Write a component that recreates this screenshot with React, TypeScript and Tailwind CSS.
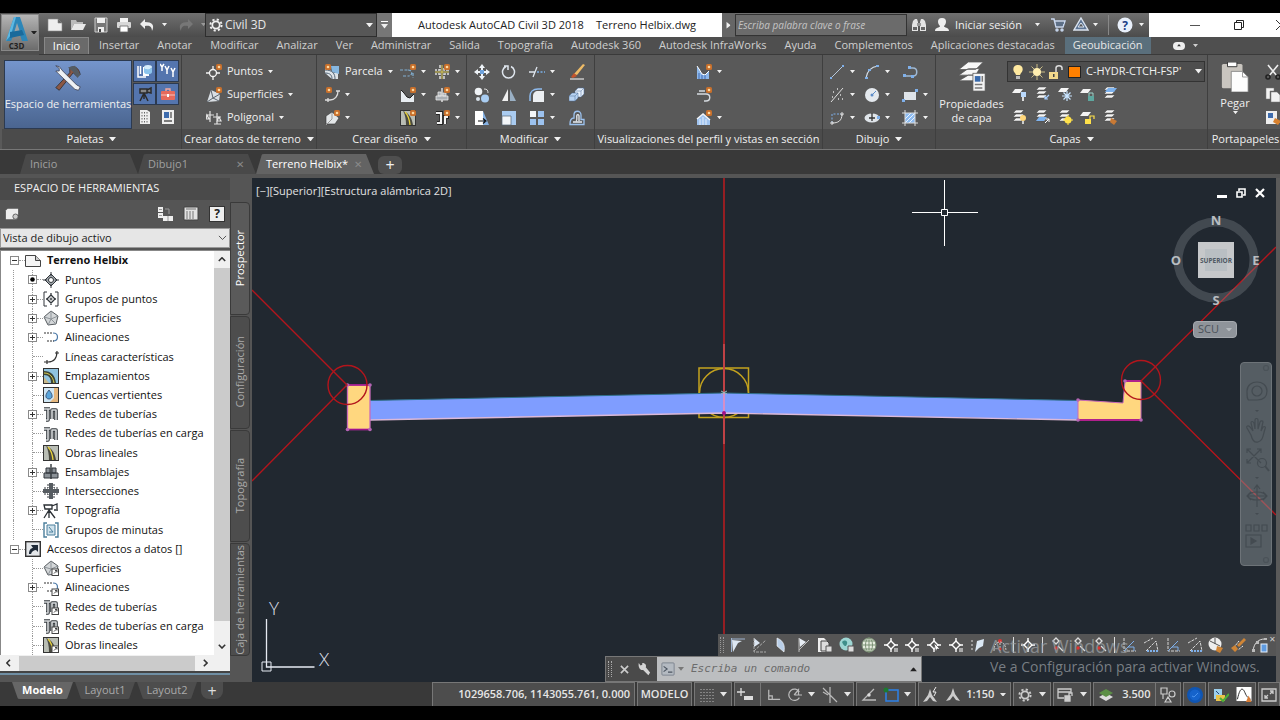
import type { ReactNode } from 'react';
import clsx from 'clsx';

/* ---------- icons ---------- */

const spark = (
  <g>
    <rect x="10" y="0" width="6" height="6" rx="1.5" fill="#c8702c" />
    <circle cx="13" cy="3" r="1.3" fill="#ffd9a0" />
  </g>
);

const sheets = (
  <path d="M5 1h8l-3 3H2zM5 5h8l-3 3H2zM5 9h8l-3 3H2z" fill="#f4f4f4" stroke="#444" strokeWidth=".5" />
);

const target = (
  <g fill="none" stroke="currentColor" strokeWidth="1.4">
    <path d="M8 4l4 4-4 4-4-4z" />
    <path d="M8 1v4M8 11v4M1 8h4M11 8h4" />
  </g>
);

const pipes = (
  <g fill="none" strokeLinejoin="round">
    <path d="M3 14h2V3M1 3h6M9 13V4h4v10" stroke="#33383c" strokeWidth="3.6" />
    <path d="M3 14h2V3M1 3h6M9 13V4h4v10" stroke="#d5d8da" strokeWidth="1.6" />
  </g>
);

const link = (
  <g>
    <rect x="9" y="9" width="6.5" height="6.5" fill="#fff" stroke="#444" />
    <path d="M11 13.5l3-3m-2 0h2v2" stroke="#444" fill="none" />
  </g>
);

const surface = (
  <g stroke="#555a5e">
    <path d="M8 1l7 5-2 8-8 1-4-8z" fill="#d3d6d8" />
    <path d="M8 1v8l7-3M8 9l5 5M8 9l-3 6M8 9L1 7" fill="none" stroke="#8d9398" />
  </g>
);

const alignment = (
  <g fill="none" stroke="#333" strokeWidth="1.2">
    <path d="M1 3h9" strokeDasharray="2 1" />
    <path d="M10 3c6 0 6 8 0 8" stroke="#4d7aa8" />
    <path d="M4 11h7" strokeDasharray="2 1" />
  </g>
);

const corridor = (
  <g>
    <rect x=".5" y=".5" width="15" height="15" fill="#b9bdb4" stroke="#333" />
    <path d="M3 1c6 2 9 7 10 14H6C6 9 5 4 3 1z" fill="#4a4a40" />
    <path d="M5 2c3 3 4.5 8 5 13" stroke="#e8d23c" strokeWidth="1.3" fill="none" />
  </g>
);

const icons: Record<string, ReactNode> = {
  newFile: <path d="M1 2h10l4 4v8H1zM11 2v4h4" fill="#eee" stroke="#888" strokeWidth=".6" />,
  open: (
    <g>
      <path d="M1 3h5l1 2h6v2H4l-3 6z" fill="#bbb" />
      <path d="M4 7h12l-3 6H1z" fill="#e8e8e8" />
    </g>
  ),
  save: (
    <g>
      <path d="M2 1h12v14H2z" fill="#777" stroke="#ccc" />
      <path d="M4 1h8v5H4zM5 10h6v5H5z" fill="#eee" />
      <path d="M6 12h2v3H6z" fill="#444" />
    </g>
  ),
  print: (
    <g>
      <path d="M4 1h8v4H4z" fill="#f4f4f4" />
      <rect x="1" y="5" width="14" height="6" rx="1" fill="#d8d8d8" />
      <path d="M4 9h8v6H4z" fill="#fff" stroke="#666" strokeWidth=".8" />
    </g>
  ),
  undo: <path d="M6 2L1 7l5 5V9c4-1 7 0 7 5 3-6 0-9-7-9z" fill="#eee" />,
  redo: <path d="M10 2l5 5-5 5V9c-4-1-7 0-7 5-3-6 0-9 7-9z" fill="#777" />,
  gear: (
    <g fill="none" stroke="currentColor">
      <circle cx="8" cy="8" r="4.2" strokeWidth="2" />
      <circle cx="8" cy="8" r="6.4" strokeWidth="2.2" strokeDasharray="2.5 2.53" />
    </g>
  ),
  binoculars: (
    <g fill="#e4e4e4">
      <path d="M2 4l2-2h2l1 3v9H1V8zM14 4l-2-2h-2L9 5v9h6V8z" />
      <path d="M6 6h4v3H6z" fill="#999" />
      <path d="M2 10h4v3H2zM10 10h4v3h-4z" fill="#666" />
    </g>
  ),
  user: <path d="M8 1c6 0 4 7 2 8 0 2 5 1 5 5H1c0-4 5-3 5-5C4 8 2 1 8 1z" fill="#eee" />,
  cart: (
    <g fill="none" stroke="#c9d8f0" strokeWidth="1.5">
      <path d="M1 2h3l2 8h7l2-6H5" />
      <path d="M6 6h8M6 8h7" stroke="#5d7594" />
      <circle cx="7" cy="13" r="1" />
      <circle cx="12" cy="13" r="1" />
    </g>
  ),
  app: (
    <g>
      <path d="M8 1l7 12H1z" fill="#5d7594" stroke="#dbe4f0" strokeWidth="1.4" />
      <path d="M8 6l3 4H5z" fill="#565656" stroke="#dbe4f0" />
    </g>
  ),
  help: (
    <g>
      <circle cx="8" cy="8" r="7.5" fill="#e9f0fb" />
      <text x="8" y="12.5" textAnchor="middle" fontSize="12" fontWeight="700" fill="#1c3f88">
        ?
      </text>
    </g>
  ),
  wrench: (
    <g>
      <path d="M9 2c3-1 5 0 6 4l-2 1-2-2-8 10-2-1.5L9 5z" fill="#8b5745" stroke="#222" strokeWidth=".4" />
      <path d="M8 2l4-1 3 5-1.5 2L11 4.5z" fill="#555c63" />
      <path d="M1 1l2 .5L5 4l8 8 2 1-1 2-2-.5L3 6 1 4l2 0 0-1.5z" fill="#eef1f4" stroke="#334" strokeWidth=".4" />
    </g>
  ),
  palData: (
    <g>
      <path d="M1 3v11h8M3.5 3v8" stroke="#fff" strokeWidth="1.5" fill="none" />
      <path d="M6 4h6v9H6z" fill="#fff" />
      <ellipse cx="11" cy="4" rx="4" ry="2" fill="#d6ecfb" />
      <path d="M7 4v5c0 3 8 3 8 0V4c0 3-8 3-8 0z" fill="#8cc4ec" />
    </g>
  ),
  palPipes: (
    <path
      d="M0 1l2 3v4M4 1L2 4M5 3l2 4v4M9 3L7 7M11 5l2 4v5M15 5l-2 4"
      stroke="#fff"
      strokeWidth="1.5"
      fill="none"
    />
  ),
  survey: (
    <g stroke="#2b2b2b" strokeWidth="1.5" fill="#888">
      <path d="M3 3h7v4H3zM10 4l4-2v5l-4-1" />
      <path d="M7 7L3 15M7 7l4 8M7 7v6" fill="none" />
    </g>
  ),
  toolbox: (
    <g>
      <path d="M6 5V3h4v2" stroke="#f3a79d" fill="none" strokeWidth="1.4" />
      <rect x="1" y="5" width="14" height="9" rx="1" fill="#e66a5c" />
      <path d="M1 9h14" stroke="#f7c2bb" />
      <rect x="7" y="8" width="2" height="3" fill="#fff" />
    </g>
  ),
  calc: (
    <g>
      <path d="M3 1h7l3 2v12H3z" fill="#eee" />
      <path d="M5 3v11M7.5 3v11M10 3v11" stroke="#666" strokeDasharray="1.5 1.5" />
    </g>
  ),
  props: (
    <g>
      <rect x="2" y="1" width="12" height="14" fill="#eee" />
      <rect x="4" y="3" width="5" height="6" fill="#3e6cae" />
      <path d="M11 3v6M4 12h8" stroke="#555" strokeWidth="1.3" />
    </g>
  ),
  points: (
    <g>
      <g stroke="#f4f4f4" strokeWidth="1.3" fill="none">
        <circle cx="7" cy="9" r="3.5" />
        <path d="M7 2v4M7 12v4M0 9h4M10 9h4" />
      </g>
      {spark}
    </g>
  ),
  surfaces: (
    <g>
      <path d="M5 3l9 4-1 7-12 1z" fill="#d9dee3" />
      <path d="M5 3l2 8-6 4M7 11l7-4M7 11l6 3" stroke="#59626b" fill="none" />
      {spark}
    </g>
  ),
  traverse: (
    <path
      d="M4 1v11M0 5h8M1 5l-1 4h3zM11 3v11M8 14h7M7 7h8M13 7l-2 4h4z"
      fill="none"
      stroke="#e4e4e4"
      strokeWidth="1.2"
    />
  ),
  parcel: (
    <g>
      <path d="M1 2h5v4l4 3h4v6H8L1 9z" fill="#dde3e8" />
      <path d="M7 2h8v8l-7-2z" fill="#86b7e0" />
      <path d="M1 9c6 0 7 3 7 6M1 6c8 0 10 4 10 9" stroke="#567" fill="none" />
      <g transform="translate(-9 0)">{spark}</g>
    </g>
  ),
  featLine: (
    <g>
      <path d="M1 13h5c5 0 8-4 8-9M4 11v4M12 4h4" fill="none" stroke="#ddd" strokeWidth="1.3" />
      <g transform="translate(-8 0)">{spark}</g>
    </g>
  ),
  grading: (
    <g>
      <path d="M2 6l6-4 7 6-4 6H2z" fill="#e3e6e8" stroke="#333" strokeWidth=".6" />
      <path d="M8 3v6l-6 6" stroke="#999" fill="none" />
      {spark}
    </g>
  ),
  align: (
    <g>
      <path
        d="M0 6h8M3 12h5M8 6c5 0 5 6 0 6M13 9v5"
        stroke="#82b0d4"
        strokeDasharray="3 1.5"
        fill="none"
        strokeWidth="1.2"
      />
      {spark}
    </g>
  ),
  inter: (
    <g>
      <path
        d="M6 1v5H1M6 15v-5H1M10 15v-5h5M10 4v2h5"
        stroke="#ddd"
        strokeWidth="1.5"
        fill="none"
        strokeDasharray="3 1"
      />
      <path d="M8 1v14M1 8h14" stroke="#dcca55" />
      {spark}
    </g>
  ),
  profile: (
    <g>
      <path d="M1 3v12h13V7l-4 4-3-1-3-4z" fill="#e8edf2" />
      <path d="M1 3l3 3 3 4 3 1 4-4" stroke="#222" fill="none" />
      {spark}
    </g>
  ),
  profileBlue: (
    <g>
      <path d="M1 2v13h12V7l-4 4-3-1-3-5z" fill="#8eb8ea" />
      <path d="M1 2l2 3 3 5 3 1 4-4" stroke="#fff" fill="none" />
      <path d="M3 9v6M6 11v4M9 11v4" stroke="#3e69b0" />
      {spark}
    </g>
  ),
  assembly: (
    <g>
      <path d="M8 1v14" stroke="#ddd" strokeWidth="1.5" />
      <path d="M2 9h12v4H2zM4 5h3v4H4zM9 6h3v3H9z" fill="#a9aeb3" stroke="#e7e7e7" strokeWidth=".8" />
      {spark}
    </g>
  ),
  corridor: (
    <g>
      {corridor}
      {spark}
    </g>
  ),
  pipeNet: (
    <g>
      <path d="M2 3h5v10H3M11 14V7h4" stroke="#222" strokeWidth="4" fill="none" />
      <path d="M2 3h5v10H3M11 14V7h3" stroke="#f2f2f2" strokeWidth="2.2" fill="none" />
      {spark}
    </g>
  ),
  move: (
    <g>
      <path d="M8 0l3 4H9v3h3V5l4 3-4 3V9H9v3h2l-3 4-3-4h2V9H4v2L0 8l4-3v2h3V4H5z" fill="#eef3f8" />
      <rect x="6" y="6" width="4" height="4" fill="#6ea2dc" />
    </g>
  ),
  rotate: <path d="M5 2.5a6 6 0 1 0 5 0M3 2h4v4" fill="none" stroke="#dfe6ee" strokeWidth="1.5" />,
  trim: (
    <g fill="none" strokeWidth="1.3">
      <path d="M0 8h6M4 13L8 3" stroke="#dfe6ee" />
      <path d="M8 8h8" stroke="#7bb0e6" strokeDasharray="2 1.5" />
    </g>
  ),
  erase: (
    <g>
      <path d="M14 0l2 1-8 10-3-1z" fill="#eebb66" />
      <path d="M5 9l3 3-4 2-2-1z" fill="#c4542d" />
      <path d="M1 15h14" stroke="#fff" />
    </g>
  ),
  copy: (
    <g>
      <circle cx="4.5" cy="4.5" r="3.8" fill="#f0f3f6" />
      <circle cx="11" cy="11.5" r="4" fill="#a9cdf2" />
      <circle cx="4" cy="12" r="2" fill="#d9e2ea" />
      <path d="M10 2c3 0 4 1 4 4" stroke="#ddd" fill="none" />
    </g>
  ),
  mirror: (
    <g>
      <path d="M7 2v12H1z" fill="#f0f0f0" />
      <path d="M9 2v12h6z" fill="#9ab0c4" />
    </g>
  ),
  fillet: (
    <g>
      <path d="M4 15V9c0-3 2-5 5-5h6v11z" fill="#eceff2" />
      <path d="M1 14V9c0-4 3-7 8-7h4" stroke="#8fbcf0" strokeWidth="1.5" fill="none" />
    </g>
  ),
  explode: (
    <g stroke="#4a6a94" strokeWidth=".5">
      <path d="M6 4l3-3h6v6l-3 3H6z" fill="#e6f0fb" />
      <path d="M0 9l3-3h6v5l-3 3H0z" fill="#b8d3f2" />
      <path d="M0 9h6v5M6 9l3-3M12 4l3-3M7 4h5v5" fill="none" />
    </g>
  ),
  stretch: (
    <g>
      <path d="M1 1h8v14H1z" fill="#fff" />
      <path d="M9 1l6 14H9z" fill="#86b2e4" />
      <path d="M4 11h7M9 8.5l3 2.5-3 2.5" stroke="#111" fill="none" strokeWidth="1.2" />
    </g>
  ),
  scale: (
    <g>
      <rect x="1" y="1" width="14" height="14" fill="#a9cbf0" />
      <path d="M1 6h9v9H1z" fill="#f2f5f8" stroke="#567" strokeWidth=".7" />
    </g>
  ),
  array: (
    <g fill="#9cc2ef">
      <rect x="1" y="1" width="6" height="6" fill="#f2f5f8" />
      <rect x="9" y="1" width="6" height="6" />
      <rect x="1" y="9" width="6" height="6" />
      <rect x="9" y="9" width="6" height="6" />
    </g>
  ),
  offset: (
    <g fill="none" strokeWidth="1.3">
      <path d="M1 14.500h14v-5h-3V5c0-5-7-5-7 0v3c-3 0-4 2-4 6z" stroke="#9cc2ef" />
      <path d="M4 12h9M7 11c2-1 0-4 1-6 1-1 2 0 2 1v5" stroke="#e8edf3" />
    </g>
  ),
  vista: (
    <g>
      <path d="M1 7h9c5 0 5 7 0 7H8M3 4h6" stroke="#d5dadf" fill="none" strokeWidth="1.4" />
      {spark}
    </g>
  ),
  section: (
    <g>
      <path d="M1 15V9l6-5 7 6v5z" fill="#9fc3ef" />
      <path d="M1 9l6-5 7 6" stroke="#f2f5f8" strokeWidth="1.5" fill="none" />
      <path d="M4 9v6M7 7v8M10 9v6" stroke="#e4eefb" />
      {spark}
    </g>
  ),
  line: (
    <g>
      <path d="M2 14L14 2" stroke="#b9c9da" />
      <path d="M1 13h2v2H1zM13 1h2v2h-2z" fill="#7fb0ea" />
    </g>
  ),
  arc: (
    <g>
      <path d="M2 14C3 7 7 3 14 2" stroke="#d4dde6" fill="none" strokeWidth="1.2" />
      <path d="M1 13h3v2H1zM4 5h3v2H4zM12 1h3v2h-3z" fill="#7fb0ea" />
    </g>
  ),
  pline: (
    <g>
      <path d="M2 12h9c5 0 5-8 0-8H7" stroke="#9fb9d4" fill="none" strokeWidth="1.5" />
      <path d="M1 10h3v3H1zM6 2h3v3H6zM9 11h3v3H9z" fill="#7fb0ea" />
    </g>
  ),
  xline: (
    <g>
      <path d="M2 15L14 1" stroke="#e0e0e0" />
      <path d="M4 5h1M8 2h1M11 8h1M9 12h1M3 10h1M13 12h1" stroke="#e0e0e0" strokeWidth="1.3" />
    </g>
  ),
  circle: (
    <g>
      <circle cx="8" cy="8" r="7" fill="#e4e9ee" />
      <circle cx="8" cy="8" r="1.5" fill="#5c8cc8" />
      <path d="M9 7l3-3" stroke="#5c8cc8" />
    </g>
  ),
  rect: (
    <g>
      <rect x="2" y="5" width="12" height="8" fill="#dfe4e9" />
      <path d="M0 12h3v3H0zM13 2h3v3h-3z" fill="#7fb0ea" />
    </g>
  ),
  polyArc: (
    <g fill="none">
      <path d="M3 13V4h9" stroke="#7fb0ea" strokeDasharray="2 1.5" />
      <path d="M3 13c6 0 10-2 10-9M3 11v4M1 13h4M13 2v4M11 4h4" stroke="#ddd" />
    </g>
  ),
  ellipse: (
    <g>
      <ellipse cx="8" cy="8" rx="7.5" ry="4.5" fill="#dfe4e9" />
      <path d="M8 3v8M5 8h6" stroke="#333" strokeWidth="1.3" />
      <rect x="13" y="6" width="3" height="3" fill="#7fb0ea" />
    </g>
  ),
  hatch: (
    <g>
      <rect x="3" y="3" width="10" height="10" fill="#8dbbf0" />
      <path d="M3 9l6-6M3 13L13 3M7 13l6-6" stroke="#e9f3ff" />
      <path d="M3 0v16M13 0v16M0 3h16M0 13h16" stroke="#ddd" />
    </g>
  ),
  bulb: (
    <g>
      <path d="M8 1c5 0 6 5 3 8l-1 2H6L5 9C2 6 3 1 8 1z" fill="#ffe9a0" />
      <path d="M6 12h4v3H6z" fill="#bbb" />
    </g>
  ),
  sun: (
    <g>
      <path d="M8 0v16M0 8h16M2.500 2.500l11 11M13.500 2.500l-11 11" stroke="#c9bb86" />
      <circle cx="8" cy="8" r="4" fill="#ffeeb0" />
    </g>
  ),
  unlock: (
    <g>
      <rect x="1" y="8" width="9" height="7" fill="#f3d98c" />
      <path d="M8 8V4c0-3 6-3 6 0v2" stroke="#ddd" strokeWidth="1.5" fill="none" />
      <rect x="5" y="10" width="1.5" height="3" fill="#444" />
    </g>
  ),
  layerOff: (
    <g>
      <path d="M4 3h8l-3 4H1z" fill="#f4f4f4" />
      <rect x="10" y="6" width="5" height="5" fill="#b9d8fb" />
      <path d="M12 11v4" stroke="#ddd" strokeWidth="2" />
    </g>
  ),
  layerIso: (
    <g>
      {sheets}
      <path d="M15 9l-4 4m0-3v3h3" stroke="#a8d0ff" fill="none" strokeWidth="1.2" />
    </g>
  ),
  layerFreeze: (
    <g>
      <path d="M4 2h8l-3 4H1z" fill="#f4f4f4" />
      <path d="M10 5v10M5 10h10M6.500 6.500l7 7M13.500 6.500l-7 7" stroke="#c8e4ff" strokeWidth="1.2" />
    </g>
  ),
  layerLock: (
    <g>
      <path d="M4 3h8l-3 4H1z" fill="#f4f4f4" />
      <rect x="9" y="10" width="6" height="5" fill="#5ea79f" />
      <path d="M10 10V7h4v3" stroke="#9ed4cc" fill="none" />
    </g>
  ),
  layerCur: (
    <g>
      {sheets}
      <path d="M6 2h9l-3 4H3z" fill="#7db2ee" />
    </g>
  ),
  layerOn: (
    <g>
      {sheets}
      <circle cx="12" cy="9" r="3" fill="#ffd67a" />
      <path d="M11 12h2v3h-2z" fill="#ccc" />
    </g>
  ),
  layerUniso: (
    <g>
      {sheets}
      <path d="M5 8h8l-3 4H2z" fill="#7db2ee" />
      <path d="M11 14l4-4m-3 0h3v3" stroke="#fff" fill="none" />
    </g>
  ),
  layerThaw: (
    <g>
      {sheets}
      <circle cx="11" cy="11" r="3.5" fill="#ffe14a" />
      <path d="M11 6v10M6 11h10" stroke="#ffe14a" />
    </g>
  ),
  layerUnlock: (
    <g>
      <path d="M4 3h8l-3 4H1z" fill="#f4f4f4" />
      <rect x="6" y="10" width="6" height="5" fill="#ffe14a" />
      <path d="M11 10V7h4v3" stroke="#ffe14a" fill="none" strokeWidth="1.2" />
    </g>
  ),
  layerMatch: (
    <g>
      {sheets}
      <path d="M9 9l6 3-3 4-4-3z" fill="#c97a35" />
    </g>
  ),
  layers: (
    <g>
      <path d="M6 0h8l-4 4H1zM6 3.500h6L10 7H1zM6 7h4l-1 3H1z" fill="#f7f7f7" stroke="#555" strokeWidth=".4" />
      <rect x="8.5" y="6" width="6.5" height="9.5" fill="#f4f4f4" stroke="#555" strokeWidth=".4" />
      <path d="M9.500 7.500h3v3h-3z" fill="#3769ac" />
      <path d="M13.500 7.500v3M9.500 12h4M9.500 13.800h4" stroke="#777" strokeWidth=".8" />
    </g>
  ),
  paste: (
    <g>
      <rect x="1" y="1" width="11" height="13" rx=".8" fill="#c9c5bf" />
      <path d="M4 0h5v2.500H4z" fill="#fff" stroke="#333" strokeWidth=".5" />
      <path d="M6 5h6l3 3v8H6z" fill="#fdfdfd" stroke="#777" strokeWidth=".4" />
      <path d="M12 5v3h3" fill="none" stroke="#999" strokeWidth=".5" />
    </g>
  ),
  cut: (
    <g fill="none" stroke="#eee" strokeWidth="1.6">
      <path d="M3 1l9 11M13 1L4 12" />
      <circle cx="3" cy="13" r="2" stroke="#222" />
      <circle cx="13" cy="13" r="2" stroke="#222" />
    </g>
  ),
  copyClip: <path d="M1 1h8v3H5v8H1zM6 5h6l3 3v7H6z" fill="#f2f2f2" stroke="#777" strokeWidth=".5" />,
  matchProp: (
    <g>
      <rect x="1" y="1" width="11" height="13" fill="#eee" />
      <rect x="3" y="3" width="5" height="5" fill="#3e6cae" />
      <path d="M10 8l6 3-3 4-5-3z" fill="#d9822f" />
    </g>
  ),

  /* tree */
  doc: (
    <g stroke="#444" fill="#f5f5f5">
      <path d="M.5 2.500h10l5 5v6H.5z" />
      <path d="M10.500 2.500v5h5" fill="#ccc" />
    </g>
  ),
  tPoints: (
    <g fill="#9fa5aa" stroke="#30353a">
      <path d="M8 2l6 6-6 6-6-6z" />
      <circle cx="8" cy="8" r="2.500" fill="#fff" />
      <path d="M8 0v4M8 12v4M0 8h4M12 8h4" />
    </g>
  ),
  tGroups: (
    <g fill="none" stroke="#30353a">
      <path d="M4 1H1v14h3M12 1h3v14h-3" />
      <path d="M8 4l4 4-4 4-4-4zM8 2v3M8 11v3M3 8h2M11 8h2" strokeWidth="1.3" />
      <circle cx="8" cy="8" r="1" />
    </g>
  ),
  tSurf: surface,
  tAlign: alignment,
  tLines: <path d="M1 13h4c5 0 9-3 9-11M4 11v4M12 4h4" fill="none" stroke="#333" strokeWidth="1.2" />,
  tSites: (
    <g>
      <rect x=".5" y=".5" width="15" height="15" fill="#8fc3e0" stroke="#333" />
      <path d="M1 3c7 0 11 4 12 12H8C8 10 6 7 1 7z" fill="#3c4536" />
      <path d="M1 5c6 0 9 4 10 10" stroke="#dccf50" fill="none" />
      <path d="M1 9l5 6H1z" fill="#c8b98a" />
    </g>
  ),
  tBasin: (
    <g>
      <rect x=".5" y=".5" width="15" height="15" fill="#cfe6f4" stroke="#333" />
      <path d="M11 1h4v14H7l4-4z" fill="#e5b77e" />
      <path d="M6 3c6 7 2 9 0 9s-6-2 0-9z" fill="#5aa6dc" stroke="#235" strokeWidth=".7" />
    </g>
  ),
  tPipes: pipes,
  tCorr: corridor,
  tAssem: (
    <g fill="#8a9096" stroke="#30353a">
      <path d="M1 9h14v5H1zM3 4h4v5H3zM9 4h4v5H9z" />
      <path d="M8 0v15" strokeWidth="1.4" />
    </g>
  ),
  tInter: (
    <g>
      <path d="M8 0v16M0 8h16" stroke="#555b60" strokeWidth="4" />
      <path d="M5 1v4H1M11 1v4h4M5 15v-4H1M11 15v-4h4" stroke="#30353a" fill="none" strokeDasharray="2 1" />
    </g>
  ),
  tSurvey: (
    <g fill="none" stroke="#2b3035" strokeWidth="1.3">
      <path d="M1 2h8v4H2zM9 3l5-2v5M6 6v9M6 7L1 15M6 7l6 8M11 7h4" />
    </g>
  ),
  tPlots: (
    <g fill="none" stroke="#4b7f9c">
      <path d="M4 1H1v14h3M12 1h3v14h-3" strokeWidth="1.4" />
      <path d="M4 3h8v10H4z" fill="#cfe2ec" />
      <path d="M6 5l4 5M6 10h4" />
    </g>
  ),
  tShort: (
    <g>
      <rect x=".7" y=".7" width="14.6" height="14.6" fill="#e4e7ea" stroke="#333" strokeWidth="1.4" />
      <path d="M4 13c0-4 2-6 4-6L6 4h7v7l-2-2c-2 0-4 1-5 4z" fill="#1e2a38" />
    </g>
  ),
  sSurf: <g>{surface}{link}</g>,
  sAlign: <g>{alignment}{link}</g>,
  sPipes: <g>{pipes}{link}</g>,
  sCorr: <g>{corridor}{link}</g>,

  /* floating toolbar */
  fA: (
    <g>
      <path d="M1 2h14M1.500 1v14" stroke="#9fb4d0" />
      <path d="M2 3l10 1-4 2-5 9z" fill="#dce6f2" />
    </g>
  ),
  fB: (
    <g>
      <path d="M2 1v9l6-4z" fill="#dce6f2" />
      <path d="M2 1v14h12M2 14L14 3" stroke="#aaa" fill="none" strokeDasharray="3 1" />
    </g>
  ),
  fC: <path d="M4 1c7 3 8 8 7 14L4 9z" fill="#b9cfe8" stroke="#fff" strokeWidth=".6" />,
  fD: (
    <g>
      <path d="M4 1l7 4-6 5z" fill="#e8eef5" />
      <path d="M4 15V1M4 13L14 3" stroke="#bbb" fill="none" />
    </g>
  ),
  fDoc: (
    <g>
      <path d="M1 1h6l3 3v11H1z" fill="#eee" />
      <path d="M4 4h6l2 2v8H4z" fill="#ddd" stroke="#444" />
      <path d="M9 9h6v6H9z" fill="#ddd" stroke="#555" />
    </g>
  ),
  fEarth: (
    <g>
      <circle cx="7" cy="7" r="6.5" fill="#9ed6d3" />
      <path d="M3 5c3-3 6-1 5 2s-3 3-5-2z" fill="#3f8f8a" />
      <path d="M9 9h6v6H9z" fill="#ddd" stroke="#555" />
    </g>
  ),
  fGlobe: (
    <g fill="none" stroke="#7b9175">
      <circle cx="8" cy="8" r="7" fill="#e6ecdf" />
      <path d="M1 8h14M8 1v14M3 4h10M3 12h10" />
      <ellipse cx="8" cy="8" rx="3.5" ry="7" />
    </g>
  ),
  fPt: <g className="text-white">{target}</g>,
  fPtB: <g className="text-white">{target}<path d="M11 11h4v4h-4z" fill="#aaa" /></g>,
  fPtC: <g className="text-white">{target}<path d="M8 6l6 6-3 0-1 3z" fill="#fff" stroke="#333" strokeWidth=".5" /></g>,
  fEdit: (
    <g>
      <path d="M2 3v11" stroke="#ddd" strokeDasharray="2 2" />
      <path d="M7 4l7-2-1 7-4 2-4 4z" fill="#dbe8f4" />
    </g>
  ),
  fRed: (
    <g>
      <circle cx="8" cy="4" r="2" fill="#d33" />
      <path d="M2 14c0-8 4-9 6-9s6 2 6 9M8 6v9" stroke="#ccc" fill="none" strokeDasharray="2 1" />
      <circle cx="8" cy="12" r="1.5" fill="#d33" />
    </g>
  ),
  fRedPt: (
    <g fill="none" stroke="#ddd" strokeWidth="1.3">
      <path d="M7 1l3 3-3 3-3-3zM9 9l5 5" />
      <circle cx="7" cy="11" r="1.7" fill="#d33" stroke="none" />
    </g>
  ),
  fAxis: (
    <g>
      <path d="M3 1v13h12" stroke="#d5d5d5" fill="none" strokeDasharray="3 1" />
      <path d="M3 14L13 4M7 10h6v4" stroke="#7fb0ea" fill="none" />
    </g>
  ),
  fAxisB: (
    <g>
      <path d="M1 6L10 1M3 14L13 4l2 10" stroke="#d5d5d5" fill="none" strokeDasharray="3 1" />
      <path d="M4 14h11" stroke="#7fb0ea" strokeDasharray="2 1" strokeWidth="2" />
    </g>
  ),
  fBall: (
    <g>
      <circle cx="7" cy="7" r="6.5" fill="#eee" />
      <path d="M2 4l10 5M7 1v6" stroke="#555" />
      <path d="M9 9l6 2-3 5-4-2z" fill="#cf8536" />
    </g>
  ),
  fBrush: (
    <g>
      <path d="M1 11l4 4 3-3-3-4zM14 1l2 2-7 7-2-2z" fill="#cf8536" />
      <path d="M9 4l-4 5M13 9l-5 4" stroke="#eee" strokeDasharray="2 1" />
    </g>
  ),
  fCalc: (
    <g>
      <path d="M1 14C2 6 6 2 13 2" stroke="#ddd" fill="none" />
      <path d="M0 12h3v3H0zM4 4h3v3H4zM12 1h3v2h-3z" fill="#bbb" />
      <rect x="9" y="7" width="6" height="8" fill="#5f9be0" stroke="#e9f1fb" />
    </g>
  ),

  /* status bar */
  grid: <path d="M2 2v13M5 2v13M8 2v13M11 2v13M14 2v13" stroke="#bbb" strokeDasharray="1 2" />,
  snap: (
    <g>
      <path d="M4 1v8M0 5h8" stroke="#ddd" strokeWidth="1.3" />
      <rect x="7" y="9" width="9" height="4" fill="#ddd" />
    </g>
  ),
  ortho: <path d="M2 2v11h13M2 9h4v4" stroke="#bbb" fill="none" strokeWidth="1.4" />,
  polar: <path d="M13 11A6.500 6.500 0 1 1 13 4.500M7 8h9M7 8l5-6v6" stroke="#bbb" fill="none" strokeWidth="1.4" />,
  iso: <path d="M1 1l14 14M8 0v16M1 5l5 3" stroke="#bbb" fill="none" strokeWidth="1.2" />,
  otrack: (
    <g>
      <path d="M15 13H2L13 2" stroke="#bbb" fill="none" strokeWidth="1.3" />
      <circle cx="8" cy="8" r="1.7" fill="#ddd" />
    </g>
  ),
  osnap: (
    <g>
      <rect x="3" y="3" width="12" height="11" fill="none" stroke="#2f7fe0" strokeWidth="1.6" />
      <circle cx="3" cy="3" r="2.5" fill="#1d7a2f" />
    </g>
  ),
  anno: <path d="M8 1l2 6 5 7-4-1-3-4-3 4-4 1 5-7z" fill="#ccc" />,
  annoB: (
    <g>
      <path d="M7 2l2 6 5 7-4-1-3-4-3 4-4 1 5-7z" fill="#ccc" />
      <path d="M13 0l-3 5h3l-2 4" stroke="#eee" fill="none" />
    </g>
  ),
  lockUi: (
    <g fill="none" stroke="#ccc" strokeWidth="1.3">
      <path d="M7 11H1V2h13v4M1 5h13" />
      <path d="M8 9h5v5H8z" fill="#ccc" />
      <path d="M12 9V6h3v3" />
    </g>
  ),
  stack: (
    <g>
      <path d="M8 6l7 4-7 4-7-4z" fill="#ddd" />
      <path d="M8 2l7 4-7 4-7-4z" fill="#5c8f46" />
    </g>
  ),
  shapes: (
    <g fill="none" stroke="#ccc" strokeWidth="1.2">
      <path d="M1 1h6v6H1zM5 15l3-5 3 5zM3 7v5" />
      <circle cx="12" cy="7" r="3" />
    </g>
  ),
  disc: (
    <g>
      <circle cx="8" cy="8" r="8" fill="#0f55b3" />
      <circle cx="8" cy="8" r="5.5" fill="#1563cb" />
      <path d="M5 9l2 1 4-4" stroke="#4a93ee" fill="none" />
    </g>
  ),
  geo: (
    <g>
      <path d="M1 2h8v10H1z" fill="#9cd0ee" />
      <path d="M3 8h9v6H3z" fill="#e9c34a" />
      <path d="M7 11l3 3 6-7" stroke="#4caf38" strokeWidth="2" fill="none" />
      <path d="M3 4l3 3" stroke="#247" />
    </g>
  ),
  graph: (
    <g>
      <rect width="16" height="15" fill="#fff" />
      <path d="M1 13C4-1 7 1 9 6s4 6 6 7" stroke="#222" fill="none" />
      <path d="M13 9l3 7h-6z" fill="#d77b34" />
    </g>
  ),
  full: (
    <g fill="none" stroke="#ccc" strokeWidth="1.3">
      <path d="M1 2h14v12H1z" />
      <path d="M4 11l3-3M9 7l3-3M4 8v3h3M9 4h3v3" />
    </g>
  ),
  treeA: (
    <g>
      <path d="M1 1h5v5H1zM1 7h5v5H1zM6 10h10v5H6z" fill="#eee" />
      <path d="M8 3h4v5M11 10v5M2 3.500h3M2 9.500h3" stroke="#999" fill="none" />
    </g>
  ),
  treeB: (
    <g>
      <path d="M1 1h14v13H1z" fill="#e2e2e2" stroke="#444" />
      <path d="M3 3h10M4 5v8M7 5v8M10 5v8" stroke="#777" />
    </g>
  ),
  treeC: (
    <g>
      <path d="M3 2h12v7l-3 5H1V4z" fill="#eee" />
      <circle cx="12" cy="11" r="3" fill="#ccc" stroke="#555" />
    </g>
  ),
  tool: <path d="M2 1l2 3 2-1 0-2c4 0 5 3 4 5l5 6-2 3-6-6C4 10 1 6 2 1z" fill="#d4d4d4" />,
  cmd: (
    <g>
      <rect x="1" y="1" width="14" height="14" rx="1" fill="#b4bac1" stroke="#78808a" />
      <path d="M3 5l4 3-4 3M8 11.500h5" stroke="#4c5560" fill="none" strokeWidth="1.3" />
    </g>
  ),
};

function Icon({ n, className = 'h-4 w-4' }: { n: string; className?: string }) {
  return (
    <svg viewBox="0 0 16 16" aria-hidden="true" className={clsx('shrink-0', className)}>
      {icons[n]}
    </svg>
  );
}

function Caret({ className = 'w-[6px]' }: { className?: string }) {
  return (
    <svg viewBox="0 0 8 5" aria-hidden="true" className={clsx('shrink-0', className)}>
      <path d="M0 0h8L4 5z" fill="currentColor" />
    </svg>
  );
}

/* ---------- title bar ---------- */

const quick = [
  ['newFile', 'Nuevo'],
  ['open', 'Abrir'],
  ['save', 'Guardar'],
  ['print', 'Trazar'],
  ['undo', 'Deshacer'],
];

function TitleBar() {
  return (
    <div className="flex h-6 items-stretch overflow-hidden bg-gradient-to-b from-[#707070] to-[#4c4c4c]">
      <div className="flex w-[166px] shrink-0 items-center gap-[7px] pl-2">
        {quick.map(([n, label]) => (
          <button key={n} aria-label={label}>
            <Icon n={n} />
          </button>
        ))}
        <Caret className="w-[5px]" />
        <button aria-label="Rehacer" className="ml-1">
          <Icon n="redo" />
        </button>
        <Caret className="w-[5px] text-[#999]" />
      </div>
      <label className="flex w-[172px] shrink-0 items-center gap-[2px] border border-[#2e2e2e] bg-[#575757] px-[3px]">
        <Icon n="gear" className="h-[14px] w-[14px]" />
        <select aria-label="Espacio de trabajo" className="min-w-0 flex-1 appearance-none bg-transparent text-xs text-[#e8e8e8]">
          <option>Civil 3D</option>
        </select>
        <Caret className="w-[7px]" />
      </label>
      <button aria-label="Personalizar" className="flex w-[15px] shrink-0 flex-col items-center justify-center gap-[2px] bg-[#777]">
        <span className="h-px w-[7px] bg-white" />
        <Caret className="w-[7px]" />
      </button>
      <div className="flex flex-1 items-center justify-center gap-3 whitespace-nowrap bg-white text-[11px] text-[#222]">
        <span>Autodesk AutoCAD Civil 3D 2018</span>
        <span>Terreno Helbix.dwg</span>
      </div>
      <button aria-label="Mostrar búsqueda" className="flex w-[13px] shrink-0 items-center justify-center bg-[#666]">
        <Caret className="w-[7px] -rotate-90" />
      </button>
      <input
        aria-label="Buscar"
        placeholder="Escriba palabra clave o frase"
        className="my-px w-[172px] shrink-0 border border-[#333] bg-[#6b6b6b] px-[2px] text-[10px] italic placeholder:text-[#c4c4c4]"
      />
      <div className="flex w-[242px] shrink-0 items-center pl-1">
        <Icon n="binoculars" />
        <Icon n="user" className="ml-[7px] h-4 w-4" />
        <button className="ml-[5px] w-[80px] whitespace-nowrap text-left text-[11px]">Iniciar sesión</button>
        <Caret className="w-[5px]" />
        <Icon n="cart" className="ml-[10px] h-4 w-4" />
        <Icon n="app" className="ml-[7px] h-4 w-4" />
        <Caret className="ml-1 w-[5px]" />
        <span className="ml-[10px] h-5 w-px bg-[#888]" />
        <Icon n="help" className="ml-2 h-4 w-4" />
        <Caret className="ml-[6px] w-[5px]" />
      </div>
      <div className="flex w-[131px] shrink-0 items-center justify-between bg-white pl-[38px]">
        <button aria-label="Minimizar" className="flex h-4 w-4 items-center justify-center">
          <span className="h-px w-[10px] bg-[#555]" />
        </button>
        <button aria-label="Restaurar" className="h-4 w-4">
          <svg viewBox="0 0 16 16" fill="none" stroke="#222">
            <path d="M3.500 5.500h7v7h-7zM5.500 5.500v-2h7v7h-2" />
          </svg>
        </button>
        <button aria-label="Cerrar" className="h-4 w-[6px] overflow-hidden">
          <svg viewBox="0 0 16 16" className="h-4 w-4" stroke="#333">
            <path d="M2 3l10 10M12 3L2 13" />
          </svg>
        </button>
      </div>
    </div>
  );
}

const ribbonTabs = [
  'Insertar', 'Anotar', 'Modificar', 'Analizar', 'Ver', 'Administrar', 'Salida', 'Topografía',
  'Autodesk 360', 'Autodesk InfraWorks', 'Ayuda', 'Complementos', 'Aplicaciones destacadas',
];

function Header() {
  return (
    <header className="flex bg-[#4f4f4f]">
      <button
        aria-label="Menú de la aplicación"
        className="ml-px mt-px flex h-[37px] w-[38px] shrink-0 items-center border border-[#888] bg-gradient-to-b from-[#b5b5b5] to-[#6c6c6c]"
      >
        <span className="flex flex-1 flex-col items-center">
          <svg viewBox="0 0 24 26" className="h-[26px] w-6">
            <path d="M9 1h6l8 24h-6l-2-6-7 1-2 5H1z" fill="#2c86b8" />
            <path d="M9 1l2 0-5 18-5 6z" fill="#5db8e2" />
            <path d="M12 7l3 9-6 1z" fill="#9ea3a6" />
            <path d="M5 16l12-2 2 5-14 3z" fill="#1a6a9b" />
          </svg>
          <span className="text-[8px] font-bold leading-[8px] text-[#222]">C3D</span>
        </span>
        <Caret className="mr-px w-[6px] text-[#222]" />
      </button>
      <div className="min-w-0 flex-1">
        <TitleBar />
        <nav className="flex h-[18px] items-center gap-[18px] overflow-hidden whitespace-nowrap border-b border-[#3a3a3a] pl-[5px] text-[11px] text-[#cfcfcf]">
          <button className="-mr-2 h-full w-[45px] border border-b-0 border-[#888] bg-[#6a6a6a] text-white">Inicio</button>
          {ribbonTabs.map((t) => (
            <button key={t}>{t}</button>
          ))}
          <button className="-ml-2 h-full bg-[#5a6f7c] px-2 text-[#e8e8e8]">Geoubicación</button>
          <button aria-label="Minimizar cinta" className="ml-1 flex items-center gap-2">
            <span className="flex h-2 w-3 items-center justify-center rounded-sm bg-[#eee]">
              <Caret className="w-1 rotate-180 text-[#333]" />
            </span>
            <Caret className="w-[5px]" />
          </button>
        </nav>
      </div>
    </header>
  );
}

/* ---------- ribbon ---------- */

interface PanelProps {
  title: string;
  className: string;
  menu?: boolean;
  children: ReactNode;
}

function Panel({ title, className, menu = true, children }: PanelProps) {
  return (
    <section className={clsx('flex shrink-0 flex-col border-r border-[#3f3f3f]', className)}>
      <div className="flex h-[75px] pt-[5px]">{children}</div>
      <button className="flex h-5 items-center justify-center gap-[6px] whitespace-nowrap bg-[#4b4b4b] text-[11px]">
        {title}
        {menu && <Caret className="w-[7px]" />}
      </button>
    </section>
  );
}

// [icon, label, has menu, label is shown]
type ToolDef = [string, string, boolean?, boolean?];

function Tools({ items, className }: { items: ToolDef[]; className?: string }) {
  return (
    <div className={clsx('flex shrink-0 flex-col', className)}>
      {items.map(([n, label, menu, text]) => (
        <button key={n} aria-label={label} className="flex h-[23px] items-center gap-[5px] whitespace-nowrap text-[11px]">
          <Icon n={n} />
          {text && <span>{label}</span>}
          {menu && <Caret className="w-[5px]" />}
        </button>
      ))}
    </div>
  );
}

const paletteToggles: [string, string, boolean][] = [
  ['palData', 'Panorámica', true],
  ['palPipes', 'Tuberías', true],
  ['survey', 'Topografía', true],
  ['toolbox', 'Caja de herramientas', true],
  ['calc', 'Calculadora', false],
  ['props', 'Propiedades', false],
];

const layerTools = [
  ['layerOff', 'Desactivar'],
  ['layerIso', 'Aislar'],
  ['layerFreeze', 'Inutilizar'],
  ['layerLock', 'Bloquear'],
  ['layerCur', 'Definir como actual'],
  ['layerOn', 'Activar todas'],
  ['layerUniso', 'Desaislar'],
  ['layerThaw', 'Reutilizar todas'],
  ['layerUnlock', 'Desbloquear'],
  ['layerMatch', 'Igualar capa'],
];

function Ribbon() {
  return (
    <div className="flex h-[95px] overflow-hidden border-b border-[#777] bg-[#595959] pl-[2px]">
      <Panel title="Paletas" className="w-[180px]">
        <button className="ml-[2px] flex h-[69px] w-[128px] flex-col items-center border border-[#2c3a50] bg-gradient-to-b from-[#7595cc] to-[#4a6590] pt-[3px] text-[11px]">
          <Icon n="wrench" className="h-7 w-7" />
          <span className="mt-1 whitespace-nowrap">Espacio de herramientas</span>
        </button>
        <div className="ml-px grid grid-cols-2 grid-rows-3">
          {paletteToggles.map(([n, label, on]) => (
            <button
              key={n}
              aria-label={label}
              className={clsx(
                'flex h-[22px] w-[23px] items-center justify-center',
                on && 'border border-[#2c3a50] bg-[#5475ae]',
              )}
            >
              <Icon n={n} />
            </button>
          ))}
        </div>
      </Panel>
      <Panel title="Crear datos de terreno" className="w-[135px]">
        <Tools
          className="pl-6"
          items={[
            ['points', 'Puntos', true, true],
            ['surfaces', 'Superficies', true, true],
            ['traverse', 'Poligonal', true, true],
          ]}
        />
      </Panel>
      <Panel title="Crear diseño" className="w-[150px]">
        <Tools
          className="w-[83px] pl-[7px]"
          items={[
            ['parcel', 'Parcela', true, true],
            ['featLine', 'Línea característica', true],
            ['grading', 'Explanación', true],
          ]}
        />
        <Tools
          className="w-[34px]"
          items={[
            ['align', 'Alineación', true],
            ['profile', 'Perfil', true],
            ['corridor', 'Obra lineal'],
          ]}
        />
        <Tools
          items={[
            ['inter', 'Intersecciones', true],
            ['assembly', 'Ensamblaje', true],
            ['pipeNet', 'Red de tuberías', true],
          ]}
        />
      </Panel>
      <Panel title="Modificar" className="w-[128px]">
        <Tools className="w-[34px] pl-[7px]" items={[['move', 'Desplazar'], ['copy', 'Copiar'], ['stretch', 'Estirar']]} />
        <Tools className="w-7" items={[['rotate', 'Girar'], ['mirror', 'Simetría'], ['scale', 'Escala']]} />
        <Tools
          className="w-10"
          items={[
            ['trim', 'Recortar', true],
            ['fillet', 'Empalme', true],
            ['array', 'Matriz', true],
          ]}
        />
        <Tools items={[['erase', 'Borrar'], ['explode', 'Descomponer'], ['offset', 'Desfase']]} />
      </Panel>
      <Panel title="Visualizaciones del perfil y vistas en sección" className="w-[228px]" menu={false}>
        <Tools
          className="pl-[101px]"
          items={[
            ['profileBlue', 'Visualización del perfil', true],
            ['vista', 'Líneas de muestreo'],
            ['section', 'Vistas en sección', true],
          ]}
        />
      </Panel>
      <Panel title="Dibujo" className="w-[113px]">
        <Tools
          className="w-[41px] pl-[6px]"
          items={[
            ['line', 'Línea', true],
            ['xline', 'Puntos auxiliares', true],
            ['polyArc', 'Curva', true],
          ]}
        />
        <Tools
          className="w-[38px]"
          items={[
            ['arc', 'Arco', true],
            ['circle', 'Círculo', true],
            ['ellipse', 'Elipse', true],
          ]}
        />
        <Tools
          items={[
            ['pline', 'Polilínea'],
            ['rect', 'Rectángulo', true],
            ['hatch', 'Sombreado', true],
          ]}
        />
      </Panel>
      <Panel title="Capas" className="w-[272px]">
        <button className="flex w-[71px] flex-col items-center text-[11px] leading-[14px]">
          <Icon n="layers" className="mb-[5px] mt-[2px] h-[30px] w-[30px]" />
          Propiedades
          <br />
          de capa
        </button>
        <div>
          <label className="mt-px flex h-[21px] w-[198px] items-center gap-[3px] border border-[#333] bg-[#4e4e4e] px-[2px]">
            <Icon n="bulb" />
            <Icon n="sun" />
            <Icon n="unlock" />
            <span className="ml-px h-3 w-[13px] shrink-0 border border-[#222] bg-[#ff8000]" />
            <select aria-label="Capa" className="ml-[2px] min-w-0 flex-1 appearance-none overflow-hidden bg-transparent text-[11px]">
              <option>C-HYDR-CTCH-FSP&apos;</option>
            </select>
            <Caret className="w-[7px]" />
          </label>
          <div className="grid w-[118px] grid-cols-5 pl-1">
            {layerTools.map(([n, label]) => (
              <button key={n} aria-label={label} className="flex h-[23px] items-center">
                <Icon n={n} />
              </button>
            ))}
          </div>
        </div>
      </Panel>
      <Panel title="Portapapeles" className="min-w-[76px] flex-1 overflow-hidden" menu={false}>
        <button className="flex w-[54px] flex-col items-center text-[11px] leading-4">
          <Icon n="paste" className="mb-[3px] mt-[2px] h-[30px] w-[30px]" />
          Pegar
          <Caret className="w-[5px]" />
        </button>
        <Tools className="pl-[3px]" items={[['cut', 'Cortar'], ['copyClip', 'Copiar'], ['matchProp', 'Igualar']]} />
      </Panel>
    </div>
  );
}

/* ---------- document tabs ---------- */

const docTabs = [
  { name: 'Inicio', active: false, closable: false },
  { name: 'Dibujo1', active: false, closable: true },
  { name: 'Terreno Helbix*', active: true, closable: true },
];

function DocumentTabs() {
  return (
    <div className="flex h-7 items-end border-b-4 border-[#555] bg-[#393939] pl-5 text-[11px]">
      {docTabs.map((t) => (
        <div
          key={t.name}
          className={clsx(
            'flex h-5 w-[118px] items-center justify-between rounded-t-lg pl-[10px] pr-3 [clip-path:polygon(6px_0,calc(100%-8px)_0,100%_100%,0_100%)]',
            t.active ? 'bg-[#636363] text-white' : 'bg-[#494949] text-[#a0a0a0]',
          )}
        >
          <button className="whitespace-nowrap">{t.name}</button>
          {t.closable && (
            <button aria-label={`Cerrar ${t.name}`} className="text-[10px] leading-none text-[#8a8a8a]">
              ✕
            </button>
          )}
        </div>
      ))}
      <button aria-label="Nuevo dibujo" className="ml-1 h-[18px] w-6 rounded-md bg-[#4f4f4f] text-base leading-4">
        +
      </button>
    </div>
  );
}

/* ---------- toolspace ---------- */

interface TreeNode {
  label: string;
  icon: string;
  box?: 'plus' | 'minus' | 'dot';
  root?: boolean;
}

const nodes: TreeNode[] = [
  { label: 'Terreno Helbix', icon: 'doc', box: 'minus', root: true },
  { label: 'Puntos', icon: 'tPoints', box: 'dot' },
  { label: 'Grupos de puntos', icon: 'tGroups', box: 'plus' },
  { label: 'Superficies', icon: 'tSurf', box: 'plus' },
  { label: 'Alineaciones', icon: 'tAlign', box: 'plus' },
  { label: 'Líneas características', icon: 'tLines' },
  { label: 'Emplazamientos', icon: 'tSites', box: 'plus' },
  { label: 'Cuencas vertientes', icon: 'tBasin' },
  { label: 'Redes de tuberías', icon: 'tPipes', box: 'plus' },
  { label: 'Redes de tuberías en carga', icon: 'tPipes' },
  { label: 'Obras lineales', icon: 'tCorr' },
  { label: 'Ensamblajes', icon: 'tAssem', box: 'plus' },
  { label: 'Intersecciones', icon: 'tInter' },
  { label: 'Topografía', icon: 'tSurvey', box: 'plus' },
  { label: 'Grupos de minutas', icon: 'tPlots' },
];

const shortcuts: TreeNode[] = [
  { label: 'Accesos directos a datos []', icon: 'tShort', box: 'minus', root: true },
  { label: 'Superficies', icon: 'sSurf' },
  { label: 'Alineaciones', icon: 'sAlign', box: 'plus' },
  { label: 'Redes de tuberías', icon: 'sPipes' },
  { label: 'Redes de tuberías en carga', icon: 'sPipes' },
  { label: 'Obras lineales', icon: 'sCorr' },
];

function ExpandBox({ kind }: { kind: string }) {
  return (
    <svg viewBox="0 0 9 9" aria-hidden="true" className="-ml-[5px] h-[9px] w-[9px] shrink-0">
      <rect x=".5" y=".5" width="8" height="8" fill="#fff" stroke="#8a8a8a" />
      {kind === 'dot' ? (
        <circle cx="4.5" cy="4.5" r="2.3" fill="#000" />
      ) : (
        <path d={kind === 'plus' ? 'M2 4.500h5M4.500 2v5' : 'M2 4.500h5'} stroke="#333" />
      )}
    </svg>
  );
}

function TreeRow({ node, trunk }: { node: TreeNode; trunk: boolean }) {
  return (
    <li className="flex min-h-[19px] flex-1 items-center whitespace-nowrap">
      {node.root ? (
        <span className="w-[14px]" />
      ) : (
        <>
          <span className={clsx('w-[13px] self-stretch border-r border-dotted', trunk ? 'border-[#999]' : 'border-transparent')} />
          <span className="w-[19px] self-stretch border-r border-dotted border-[#999]" />
        </>
      )}
      {node.box ? (
        <>
          <ExpandBox kind={node.box} />
          <span className="w-[6px] border-t border-dotted border-[#999]" />
        </>
      ) : (
        <span className="w-[10px] border-t border-dotted border-[#999]" />
      )}
      <Icon n={node.icon} />
      <span className={clsx('ml-[6px]', node.label === 'Terreno Helbix' && 'font-bold')}>{node.label}</span>
    </li>
  );
}

const sideTabs = ['Prospector', 'Configuración', 'Topografía', 'Caja de herramientas'];

function Toolspace() {
  return (
    <aside className="flex w-[252px] shrink-0 bg-[#555] text-[11px]">
      <div className="flex w-[230px] flex-col">
        <h2 className="h-[22px] bg-[#4a4a4a] pl-[14px] leading-5">ESPACIO DE HERRAMIENTAS</h2>
        <div className="flex h-7 items-center gap-[10px] px-[5px]">
          <button aria-label="Elementos" className="mr-auto">
            <Icon n="treeC" className="h-[14px] w-[14px]" />
          </button>
          <button aria-label="Vista de árbol">
            <Icon n="treeA" />
          </button>
          <button aria-label="Panorámica">
            <Icon n="treeB" />
          </button>
          <button className="h-4 w-4 border border-[#333] bg-[#eee] text-xs font-bold leading-[14px] text-[#222]">?</button>
        </div>
        <label className="flex h-5 items-center border border-[#999] bg-[#e6e6e6] px-[2px] text-[#222]">
          <select aria-label="Vista" className="flex-1 appearance-none bg-transparent text-[11px]">
            <option>Vista de dibujo activo</option>
          </select>
          <svg viewBox="0 0 10 6" className="w-[9px]" fill="none" stroke="#444">
            <path d="M1 1l4 4 4-4" />
          </svg>
        </label>
        <div className="mt-[2px] flex flex-1 border-l border-t border-[#888] bg-white text-[#111]">
          <ul className="flex flex-1 flex-col overflow-hidden">
            {nodes.map((n) => (
              <TreeRow key={n.label} node={n} trunk />
            ))}
            {shortcuts.map((n) => (
              <TreeRow key={n.label} node={n} trunk={false} />
            ))}
          </ul>
          <div className="flex w-4 flex-col items-center bg-[#f0f0f0]">
            <button aria-label="Subir" className="flex h-[17px] items-center">
              <svg viewBox="0 0 10 6" className="w-2" fill="none" stroke="#333" strokeWidth="2">
                <path d="M1 5l4-4 4 4" />
              </svg>
            </button>
            <span className="w-4 flex-1 bg-[#cbcbcb]" />
            <button aria-label="Bajar" className="flex h-[34px] items-end pb-[6px]">
              <svg viewBox="0 0 10 6" className="w-2" fill="none" stroke="#333" strokeWidth="2">
                <path d="M1 1l4 4 4-4" />
              </svg>
            </button>
          </div>
        </div>
        <div className="flex h-4 items-center bg-[#f0f0f0] pl-[6px] pr-[22px]">
          <svg viewBox="0 0 6 10" className="mr-2 h-2" fill="none" stroke="#333" strokeWidth="2">
            <path d="M5 1L1 5l4 4" />
          </svg>
          <span className="h-[15px] flex-1 bg-[#cbcbcb]" />
          <svg viewBox="0 0 6 10" className="ml-2 h-2" fill="none" stroke="#333" strokeWidth="2">
            <path d="M1 1l4 4-4 4" />
          </svg>
        </div>
        <div className="mb-[7px] h-1 border-b-2 border-[#6f8ea3] bg-[#444]" />
      </div>
      <div className="mb-[26px] mt-6 flex w-5 flex-col gap-px">
        {sideTabs.map((t, i) => (
          <button
            key={t}
            className={clsx(
              'flex flex-1 items-center justify-center rounded-r border border-[#3a3a3a]',
              i === 0 ? 'bg-[#5a5a5a] text-white' : 'bg-[#4d4d4d] text-[#aaa]',
            )}
          >
            <span className="rotate-180 whitespace-nowrap [writing-mode:vertical-rl]">{t}</span>
          </button>
        ))}
      </div>
    </aside>
  );
}

/* ---------- drawing area ---------- */

function Drawing() {
  return (
    <svg viewBox="0 0 1024 504" preserveAspectRatio="xMidYMid slice" className="absolute inset-0 h-full w-full" fill="none">
      <g stroke="#c3a21e" strokeWidth="1.5">
        <rect x="447" y="190" width="49.5" height="49.5" />
        <circle cx="472" cy="215" r="24.5" />
      </g>
      <path d="M118 222.500L472 215l354 7.500v19.500l-354-7-354 7z" fill="#7f9dff" />
      <path d="M118 222.500L472 215l354 7.500" stroke="#2f6f8a" />
      <path d="M118 242l354-7 354 7" stroke="#dcb9d8" strokeWidth="1.3" />
      <path d="M472 0v504" stroke="#a31d22" strokeWidth="1.8" />
      <path d="M472 166v100" stroke="#c4464a" strokeWidth="1.8" />
      <path d="M472 215v20" stroke="#d48fc8" strokeWidth="2" />
      <path d="M469 213l6 3m-6 0l6-3" stroke="#9bb" />
      <circle cx="472" cy="235" r="2" fill="#a0108c" />
      <rect x="95.500" y="207" width="22.5" height="44.5" fill="#ffd77f" stroke="#c86ab8" strokeWidth="1.3" />
      <path d="M95 251.500h23M95 207h23" stroke="#a0108c" strokeWidth="1.5" />
      <path d="M826 222l45 3 2-22h16v39h-63z" fill="#ffd77f" stroke="#c86ab8" strokeWidth="1" />
      <path d="M826 242h63M873 203h16" stroke="#b0208c" strokeWidth="1.8" />
      <g fill="#b565b5">
        <circle cx="95.500" cy="207" r="1.8" />
        <circle cx="118" cy="207" r="1.8" />
        <circle cx="95.500" cy="251.500" r="1.8" />
        <circle cx="118" cy="251.500" r="1.8" />
        <circle cx="826" cy="222" r="1.8" />
        <circle cx="826" cy="242" r="1.8" />
        <circle cx="889" cy="242" r="1.8" />
        <circle cx="873" cy="203" r="1.8" />
      </g>
      <g stroke="#b3151c" strokeWidth="1.4">
        <path d="M0 112l95 95L0 303" />
        <path d="M1024 69L889 203l135 134" />
        <circle cx="95.500" cy="207" r="19.5" />
        <circle cx="889" cy="202" r="19.5" />
      </g>
      <path d="M660 34.500h30M696 34.500h30M692.500 2v30M692.500 38v30M689.500 31.500h6v6h-6z" stroke="#fff" />
      <g stroke="#e6eaf2">
        <path d="M14.500 441v48h48" strokeWidth="1.3" />
        <path d="M10 484h9v9h-9z" />
      </g>
      <g fill="#d8dce4" fontSize="19" fontWeight="300">
        <text x="22" y="437" textAnchor="middle">Y</text>
        <text x="72" y="488" textAnchor="middle">X</text>
      </g>
    </svg>
  );
}

function ViewCube() {
  return (
    <svg viewBox="0 0 96 96" className="absolute right-3 top-[34px] h-24 w-24" textAnchor="middle" fontWeight="700">
      <circle cx="48" cy="48" r="38" fill="none" stroke="#8a9096" strokeOpacity=".32" strokeWidth="9" />
      <rect x="30" y="30" width="36" height="36" fill="#c6c8ca" />
      <rect x="37" y="37" width="22" height="22" fill="#b9bfc3" />
      <text x="48" y="51" fontSize="6.500" fill="#4f5963">SUPERIOR</text>
      <g fontSize="13" fill="#b9bdc1">
        <text x="48" y="13">N</text>
        <text x="48" y="93">S</text>
        <text x="8" y="53">O</text>
        <text x="88" y="53">E</text>
      </g>
    </svg>
  );
}

function NavBar() {
  return (
    <div className="absolute right-1 top-[184px] h-[204px] w-8 rounded border border-[#6d7378] bg-[#8a9296]/50">
      <svg viewBox="0 0 30 202" className="h-full w-full opacity-60" fill="none" stroke="#394046" strokeWidth="1.2">
        <circle cx="25" cy="5" r="2.5" strokeOpacity=".6" />
        <path d="M6 28c0-12 20-12 20 0 0 6-3 9-10 9H8c-2 0-2-4-2-9z" />
        <circle cx="16" cy="28" r="5" />
        <path
          d="M10 62l-4-7c-1-2 1-3 3-1l3 4-2-8c0-2 2-2 3 0l1 6V47c0-2 3-2 3 0v9l2-7c1-2 3-1 3 0l-2 9 2-4c2-1 3 0 2 2-2 6-2 12-7 13-4 1-6-3-7-7z"
          transform="translate(0 10)"
        />
        <path d="M6 86l14 14M20 86L6 100M6 90v-4h4M16 86h4v4M6 96v4h4" />
        <circle cx="21" cy="100" r="4.5" />
        <path d="M24 103l4 5" strokeWidth="2" />
        <path d="M16 122v22M6 133h20M13 126l3-4 3 4M10 129l-4 4 4 4M22 129l4 4-4 4" />
        <ellipse cx="16" cy="133" rx="9" ry="4" />
        <path d="M5 162h5v6H5zM13 162h5v6h-5zM21 162h5v6h-5zM5 172h15v12H5z" />
        <path d="M10 175v6l5-3z" fill="#394046" />
        <circle cx="25" cy="197" r="2.5" strokeOpacity=".6" />
        <g fill="#394046" stroke="none">
          <path d="M14 47h4l-2 2zM14 114h4l-2 2zM14 150h4l-2 2z" />
        </g>
      </svg>
    </div>
  );
}

const floatTools = [
  'fA', 'fB', 'fC', 'fD', 'fDoc', 'fEarth', 'fGlobe', 'fPtB', 'fPtB', 'fPtC', 'fPtB', 'fEdit', 'fRed', '|', 'fPt', '|',
  'fRedPt', 'fRedPt', 'fRedPt', '|', 'fAxis', 'fAxisB', 'fAxis', 'fAxisB', 'fBall', 'fBrush', 'fCalc',
];

function Canvas() {
  return (
    <main className="relative min-w-0 flex-1 overflow-hidden bg-[#212830]">
      <Drawing />
      <div className="absolute left-1 top-[5px] text-[11px] text-[#e2e2e2]">[−][Superior][Estructura alámbrica 2D]</div>
      <div className="absolute right-[11px] top-[9px] flex items-center gap-[9px] text-white">
        <button aria-label="Minimizar vista" className="flex h-[11px] w-[10px] items-end">
          <span className="h-[3px] w-full bg-white" />
        </button>
        <button aria-label="Restaurar vista">
          <svg viewBox="0 0 10 10" className="h-[10px] w-[10px]" fill="none" stroke="#fff" strokeWidth="1.6">
            <path d="M1 4h5v5H1zM3 3V1h6v6H7" />
          </svg>
        </button>
        <button aria-label="Cerrar vista">
          <svg viewBox="0 0 10 10" className="h-[10px] w-[10px]" stroke="#fff" strokeWidth="2.2">
            <path d="M1 1l8 8M9 1L1 9" />
          </svg>
        </button>
      </div>
      <ViewCube />
      <button className="absolute right-[39px] top-[143px] flex h-[17px] w-11 items-center justify-between rounded border border-[#a5a9ae] bg-[#8f949a] px-1 text-[11px] text-[#4b5259]">
        SCU
        <Caret className="w-[6px] text-[#b4b9bd]" />
      </button>
      <NavBar />
      <div className="absolute bottom-[26px] right-0 flex h-[22px] w-[558px] items-center justify-between bg-[#555] pl-[2px] pr-2">
        <span className="h-4 w-1 border-x border-dotted border-[#999]" />
        {floatTools.map((n, i) =>
          n === '|' ? (
            <span key={i} className="h-4 w-px bg-[#ddd]" />
          ) : (
            <button key={i} aria-label={`Herramienta ${i + 1}`}>
              <Icon n={n} />
            </button>
          ),
        )}
        <button aria-label="Cerrar barra" className="absolute right-0 top-0 text-[8px] leading-[10px] text-[#ccc]">
          ✕
        </button>
      </div>
      <div className="absolute bottom-0 left-[353px] flex h-[26px] w-[317px] border border-[#777] bg-[#4a4a4a]">
        <div className="flex w-[51px] items-center gap-2 pl-[2px]">
          <span className="h-4 w-1 border-x border-dotted border-[#aaa]" />
          <button aria-label="Cerrar línea de comandos">
            <svg viewBox="0 0 10 10" className="h-[9px] w-[9px]" stroke="#ccc" strokeWidth="1.8">
              <path d="M1 1l8 8M9 1L1 9" />
            </svg>
          </button>
          <Icon n="tool" className="h-[14px] w-[14px]" />
        </div>
        <div className="flex flex-1 items-center gap-[3px] bg-[#bcbec0] pl-1 pr-1 text-[#222]">
          <Icon n="cmd" className="h-[14px] w-[14px]" />
          <Caret className="w-[6px] text-[#777]" />
          <input
            aria-label="Línea de comandos"
            placeholder="Escriba un comando"
            className="min-w-0 flex-1 bg-transparent pl-1 font-['DejaVu_Sans_Mono',monospace] text-[11px] italic placeholder:text-[#6c6c6c]"
          />
          <Caret className="w-[7px] rotate-180" />
        </div>
      </div>
      <div className="pointer-events-none absolute bottom-[5px] left-[738px] whitespace-nowrap text-[#a0a5aa]/70">
        <p className="text-lg leading-[22px]">Activar Windows</p>
        <p className="text-sm leading-5">Ve a Configuración para activar Windows.</p>
      </div>
    </main>
  );
}

/* ---------- status bar ---------- */

function Cell({ className, children }: { className: string; children: ReactNode }) {
  return (
    <div className={clsx('mr-[2px] flex shrink-0 items-center border-x border-t border-[#777] bg-[#4d4d4d] last:mr-0', className)}>
      {children}
    </div>
  );
}

function StatusBar() {
  return (
    <footer className="flex h-6 items-stretch bg-[#393939] text-[11px]">
      <div className="flex items-start gap-[2px] pl-3 text-[#aaa]">
        <button className="h-[17px] w-[61px] rounded-b-lg bg-[#666] font-bold text-white [clip-path:polygon(0_0,100%_0,calc(100%-6px)_100%,6px_100%)]">
          Modelo
        </button>
        <button className="h-[17px] w-[60px] rounded-b-lg bg-[#4d4d4d] [clip-path:polygon(0_0,100%_0,calc(100%-6px)_100%,6px_100%)]">
          Layout1
        </button>
        <button className="h-[17px] w-[60px] rounded-b-lg bg-[#4d4d4d] [clip-path:polygon(0_0,100%_0,calc(100%-6px)_100%,6px_100%)]">
          Layout2
        </button>
        <button aria-label="Nueva presentación" className="ml-[2px] h-[17px] w-[22px] rounded-b-lg bg-[#4d4d4d] text-base leading-4 text-[#ddd]">
          +
        </button>
      </div>
      <div className="ml-auto flex overflow-hidden font-semibold text-[#e6e6e6]">
        <Cell className="w-[203px] justify-end pr-1">1029658.706, 1143055.761, 0.000</Cell>
        <Cell className="w-[55px] justify-center">MODELO</Cell>
        <Cell className="w-[38px] justify-between px-1">
          <Icon n="grid" />
          <Caret className="w-[7px]" />
        </Cell>
        <Cell className="w-[120px] justify-between px-[2px]">
          <Icon n="snap" />
          <span className="h-full w-px bg-[#777]" />
          <Icon n="ortho" className="h-[14px] w-[14px]" />
          <Icon n="polar" className="h-[14px] w-[14px]" />
          <Caret className="w-[7px]" />
          <Icon n="iso" />
          <Caret className="w-[7px]" />
        </Cell>
        <Cell className="w-[60px] justify-between px-1">
          <Icon n="otrack" />
          <Icon n="osnap" />
          <Caret className="w-[7px]" />
        </Cell>
        <Cell className="w-[93px] justify-between px-1">
          <Icon n="annoB" />
          <Icon n="anno" />
          <span>1:150</span>
          <Caret className="w-[6px]" />
        </Cell>
        <Cell className="w-[38px] justify-between px-1">
          <Icon n="gear" className="h-[14px] w-[14px] text-[#ccc]" />
          <Caret className="w-[7px]" />
        </Cell>
        <Cell className="w-[38px] justify-between px-[3px]">
          <Icon n="lockUi" />
          <Caret className="w-[7px]" />
        </Cell>
        <Cell className="w-[88px] justify-between px-1">
          <Icon n="stack" />
          <span className="pl-1">3.500</span>
          <span className="h-full w-px bg-[#777]" />
          <Icon n="shapes" />
        </Cell>
        <Cell className="w-[23px] justify-center">
          <Icon n="disc" />
        </Cell>
        <Cell className="w-[48px] justify-around">
          <Icon n="geo" />
          <Icon n="graph" className="h-[15px] w-4" />
        </Cell>
        <Cell className="w-[22px] justify-center">
          <Icon n="full" />
        </Cell>
      </div>
    </footer>
  );
}

export default function App() {
  return (
    <div className="flex min-h-screen w-full flex-col overflow-hidden bg-black pb-[14px] pt-[13px] font-['Open_Sans','Noto_Sans',sans-serif] text-[#f0f0f0]">
      <Header />
      <Ribbon />
      <DocumentTabs />
      <div className="flex flex-1">
        <Toolspace />
        <Canvas />
        <div className="w-1 bg-[#5a5a5a]" />
      </div>
      <StatusBar />
    </div>
  );
}
